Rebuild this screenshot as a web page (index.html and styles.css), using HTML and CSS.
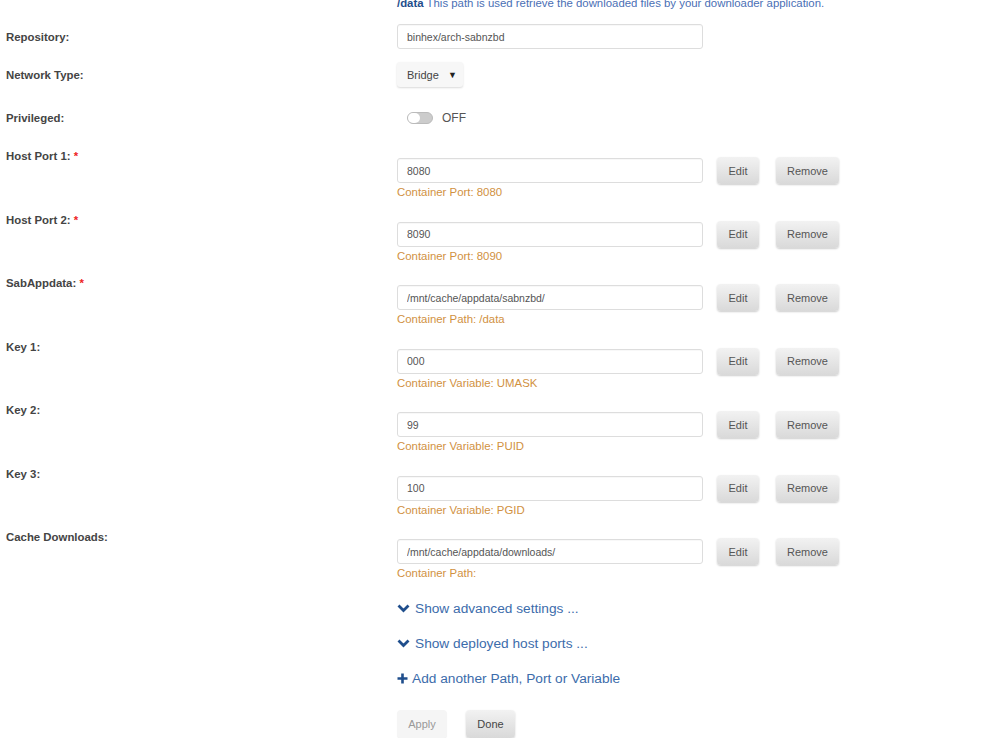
FILE: index.html
```html
<!DOCTYPE html>
<html lang="en">
<head>
  <meta charset="UTF-8" />
  <title>Update Container</title>
  <link rel="stylesheet" href="styles.css">
</head>
<body>

<div class="form">
  <div class="row note-row">
    <span></span>
    <div class="note"><b>/data</b> This path is used retrieve the downloaded files by your downloader application.</div>
  </div>

  <div class="row simple repo">
    <label>Repository:</label>
    <div><input type="text" value="binhex/arch-sabnzbd"></div>
  </div>

  <div class="row simple network">
    <label>Network Type:</label>
    <div><span class="select">Bridge <i>&#9660;</i></span></div>
  </div>

  <div class="row simple privileged">
    <label>Privileged:</label>
    <div class="switch-wrap"><span class="switch"><span class="knob"></span></span><span class="switch-label">OFF</span></div>
  </div>

  <div class="row config">
    <label>Host Port 1: <em>*</em></label>
    <div class="field">
      <div class="line"><input type="text" value="8080"><button class="btn">Edit</button><button class="btn remove">Remove</button></div>
      <div class="hint">Container Port: 8080</div>
    </div>
  </div>

  <div class="row config">
    <label>Host Port 2: <em>*</em></label>
    <div class="field">
      <div class="line"><input type="text" value="8090"><button class="btn">Edit</button><button class="btn remove">Remove</button></div>
      <div class="hint">Container Port: 8090</div>
    </div>
  </div>

  <div class="row config">
    <label>SabAppdata: <em>*</em></label>
    <div class="field">
      <div class="line"><input type="text" value="/mnt/cache/appdata/sabnzbd/"><button class="btn">Edit</button><button class="btn remove">Remove</button></div>
      <div class="hint">Container Path: /data</div>
    </div>
  </div>

  <div class="row config">
    <label>Key 1:</label>
    <div class="field">
      <div class="line"><input type="text" value="000"><button class="btn">Edit</button><button class="btn remove">Remove</button></div>
      <div class="hint">Container Variable: UMASK</div>
    </div>
  </div>

  <div class="row config">
    <label>Key 2:</label>
    <div class="field">
      <div class="line"><input type="text" value="99"><button class="btn">Edit</button><button class="btn remove">Remove</button></div>
      <div class="hint">Container Variable: PUID</div>
    </div>
  </div>

  <div class="row config">
    <label>Key 3:</label>
    <div class="field">
      <div class="line"><input type="text" value="100"><button class="btn">Edit</button><button class="btn remove">Remove</button></div>
      <div class="hint">Container Variable: PGID</div>
    </div>
  </div>

  <div class="row config">
    <label>Cache Downloads:</label>
    <div class="field">
      <div class="line"><input type="text" value="/mnt/cache/appdata/downloads/"><button class="btn">Edit</button><button class="btn remove">Remove</button></div>
      <div class="hint">Container Path:</div>
    </div>
  </div>

  <!-- toggles and actions under the config list -->
  <div class="row links">
    <span></span>
    <div class="link-list">
      <a class="link"><svg width="13" height="10" viewBox="0 0 13 10"><path d="M1.5 2.5 L6.5 7.5 L11.5 2.5" fill="none" stroke="#1f4e8c" stroke-width="2.8"/></svg>Show advanced settings ...</a>
      <a class="link"><svg width="13" height="10" viewBox="0 0 13 10"><path d="M1.5 2.5 L6.5 7.5 L11.5 2.5" fill="none" stroke="#1f4e8c" stroke-width="2.8"/></svg>Show deployed host ports ...</a>
      <a class="link add"><svg width="11" height="11" viewBox="0 0 11 11"><path d="M5.5 0.5 V10.5 M0.5 5.5 H10.5" fill="none" stroke="#1f4e8c" stroke-width="2.6"/></svg>Add another Path, Port or Variable</a>
    </div>
  </div>

  <div class="row actions">
    <span></span>
    <div class="buttons">
      <button class="btn apply">Apply</button>
      <button class="btn done">Done</button>
    </div>
  </div>
</div>

</body>
</html>
```

FILE: styles.css
```css
body {
  margin: 0;
  font-family: 'Liberation Sans', Arial, sans-serif;
  background: #fff;
  color: #444;
  overflow: hidden;
}

.form {
  padding-left: 6px;
}

.row {
  display: grid;
  grid-template-columns: 391px 1fr;
}

.row label {
  font-size: 11.4px;
  font-weight: bold;
  line-height: 14px;
  color: #444;
}

.row label em {
  font-style: normal;
  color: #e22;
}

.note-row {
  margin-top: -5px;
}

.note {
  font-size: 11.4px;
  line-height: 16px;
  color: #4a6fb5;
  white-space: nowrap;
}

.note b {
  color: #1f4e8c;
}

.simple {
  align-items: center;
}

.repo {
  margin-top: 13px;
}

.network {
  margin-top: 13px;
}

.privileged {
  margin-top: 21px;
  height: 20px;
}

input[type="text"] {
  box-sizing: border-box;
  width: 306px;
  height: 25px;
  padding: 0 9px;
  border: 1px solid #ddd;
  border-radius: 3px;
  font-family: inherit;
  font-size: 10.5px;
  color: #555;
  background: #fff;
  box-shadow: inset 0 1px 1px rgba(0,0,0,0.03);
}

.select {
  display: inline-flex;
  align-items: center;
  justify-content: space-between;
  box-sizing: border-box;
  width: 66px;
  height: 25px;
  padding: 0 6px 0 10px;
  font-size: 11px;
  color: #444;
  background: #f7f7f7;
  border-radius: 3px;
  box-shadow: 0 1px 2px rgba(0,0,0,0.15);
}

.select i {
  font-style: normal;
  font-size: 9px;
  color: #222;
}

.switch-wrap {
  display: flex;
  align-items: center;
  padding-left: 10px;
}

.switch {
  position: relative;
  display: inline-block;
  box-sizing: border-box;
  width: 26px;
  height: 12px;
  border-radius: 6px;
  background: #ccc;
  border: 1px solid #bbb;
}

.knob {
  position: absolute;
  left: 0;
  top: 0;
  width: 12px;
  height: 10px;
  border-radius: 5px;
  background: #fff;
}

.switch-label {
  margin-left: 9px;
  font-size: 12px;
  color: #555;
}

.config {
  margin-top: 11.5px;
}

.privileged + .config {
  margin-top: 21px;
}

.field {
  padding-top: 8px;
}

.line {
  display: flex;
  align-items: center;
  height: 27px;
}

.btn {
  box-sizing: border-box;
  height: 27px;
  padding: 0;
  border: none;
  border-radius: 4px;
  font-family: inherit;
  font-size: 11px;
  color: #555;
  background: linear-gradient(#f2f2f2, #d9d9d9);
  box-shadow: 0 1px 2px rgba(0,0,0,0.2);
  cursor: pointer;
}

.line .btn {
  width: 42px;
  margin-left: 14px;
}

.line .btn.remove {
  width: 63px;
  margin-left: 17px;
}

.hint {
  font-size: 11.4px;
  line-height: 17px;
  color: #d1913f;
}

.links {
  margin-top: 16px;
}

.link-list {
  display: flex;
  flex-direction: column;
  gap: 15px;
}

.link {
  display: flex;
  align-items: center;
  height: 20px;
  font-size: 13.7px;
  color: #3c6cab;
  cursor: pointer;
}

.link svg {
  margin-right: 5px;
}

.link.add svg {
  margin-right: 4px;
}

.actions {
  margin-top: 22px;
}

.buttons {
  display: flex;
  gap: 19px;
}

.btn.apply {
  width: 50px;
  height: 28px;
  color: #999;
  background: #f5f5f5;
  box-shadow: 0 1px 1px rgba(0,0,0,0.06);
}

.btn.done {
  width: 49px;
  height: 28px;
  color: #444;
}
```
